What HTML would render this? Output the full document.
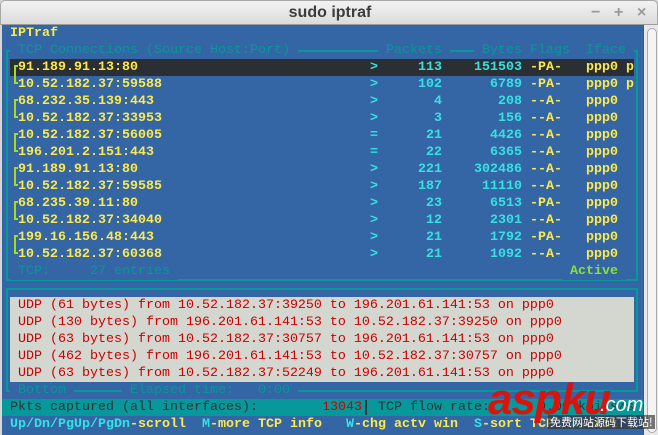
<!DOCTYPE html>
<html><head><meta charset="utf-8"><style>
*{margin:0;padding:0;box-sizing:border-box}
body{width:658px;height:435px;overflow:hidden;background:#d6d6d6;position:relative;font-family:"Liberation Mono",monospace}
#title{position:absolute;left:0;top:0;width:658px;height:25px;background:linear-gradient(#f2f2f2,#dcdcdc);border:1px solid #a8a8a8;border-bottom:1px solid #9a9a9a;border-radius:5px 5px 0 0}
#title .t{position:absolute;left:0;width:658px;top:3px;text-align:center;font:bold 16px "Liberation Sans",sans-serif;color:#3c3c3c}
#title .b{position:absolute;top:3px;font:bold 16px "Liberation Sans",sans-serif;color:#9a9a9a}
#term{position:absolute;left:2px;top:25px;width:641px;height:410px;background:#3465a4;overflow:hidden}
#sb{position:absolute;left:643px;top:25px;width:15px;height:410px;background:#e8e8e8;border-left:1px solid #555}
#sb div{position:absolute;left:3px;top:3px;width:10px;height:405px;border:1px solid #aaa;border-radius:5px;background:#f4f4f4}
.s{position:absolute;font-size:13.333px;line-height:17px;height:17px;white-space:pre}
.y{color:#fce94f;font-weight:bold}
.c{color:#34e2e2;font-weight:bold}
.t2{color:#06989a}
.r{color:#cc0000}
.hl{position:absolute;background:#06989a}
.vl{position:absolute;background:#06989a;width:2px}
.br{position:absolute;border-left:2px solid #a4dc1e;border-top:2px solid #a4dc1e;border-bottom:2px solid #a4dc1e;width:4px}
</style></head><body>
<div id="title"><div class="t">sudo iptraf</div><div class="b" style="left:590px">−</div><div class="b" style="left:613px">+</div><div class="b" style="left:636px">×</div></div>
<div id="term">
<div class="s y" style="left:8px;top:0">IPTraf</div>
<div class="hl" style="left:4px;top:25px;width:632px;height:2px"></div>
<div class="vl" style="left:4px;top:25px;height:230px"></div>
<div class="vl" style="left:634px;top:25px;height:230px"></div>
<div class="hl" style="left:4px;top:254px;width:632px;height:2px"></div>
<div class="s t2" style="left:8px;top:17px;background:#3465a4"> TCP Connections (Source Host:Port) </div>
<div class="s t2" style="left:376px;top:17px;background:#3465a4"> Packets </div>
<div class="s t2" style="left:472px;top:17px;background:#3465a4"> Bytes Flags  Iface </div>
<div class="s t2" style="left:8px;top:238px;background:#3465a4"> TCP:     27 entries </div>
<div class="s" style="left:560px;top:238px;background:#3465a4;color:#8ae234;font-weight:bold"> Active </div>
<div style="position:absolute;left:8px;top:34px;width:624px;height:17px;background:#2b2f33"></div>
<div class="br" style="top:40px;left:12px;height:19px"></div>
<div class="br" style="top:74px;left:12px;height:19px"></div>
<div class="br" style="top:108px;left:12px;height:19px"></div>
<div class="br" style="top:142px;left:12px;height:19px"></div>
<div class="br" style="top:176px;left:12px;height:19px"></div>
<div class="br" style="top:210px;left:12px;height:19px"></div>

<div class="s y" style="left:16px;top:34px">91.189.91.13:80</div>
<div class="s y" style="left:16px;top:51px">10.52.182.37:59588</div>
<div class="s y" style="left:16px;top:68px">68.232.35.139:443</div>
<div class="s y" style="left:16px;top:85px">10.52.182.37:33953</div>
<div class="s y" style="left:16px;top:102px">10.52.182.37:56005</div>
<div class="s y" style="left:16px;top:119px">196.201.2.151:443</div>
<div class="s y" style="left:16px;top:136px">91.189.91.13:80</div>
<div class="s y" style="left:16px;top:153px">10.52.182.37:59585</div>
<div class="s y" style="left:16px;top:170px">68.235.39.11:80</div>
<div class="s y" style="left:16px;top:187px">10.52.182.37:34040</div>
<div class="s y" style="left:16px;top:204px">199.16.156.48:443</div>
<div class="s y" style="left:16px;top:221px">10.52.182.37:60368</div>

<div class="s c" style="left:368px;top:34px">&gt;     113    151503</div>
<div class="s c" style="left:368px;top:51px">&gt;     102      6789</div>
<div class="s c" style="left:368px;top:68px">&gt;       4       208</div>
<div class="s c" style="left:368px;top:85px">&gt;       3       156</div>
<div class="s c" style="left:368px;top:102px">=      21      4426</div>
<div class="s c" style="left:368px;top:119px">=      22      6365</div>
<div class="s c" style="left:368px;top:136px">&gt;     221    302486</div>
<div class="s c" style="left:368px;top:153px">&gt;     187     11110</div>
<div class="s c" style="left:368px;top:170px">&gt;      23      6513</div>
<div class="s c" style="left:368px;top:187px">&gt;      12      2301</div>
<div class="s c" style="left:368px;top:204px">&gt;      21      1792</div>
<div class="s c" style="left:368px;top:221px">&gt;      21      1092</div>

<div class="s y" style="left:528px;top:34px">-PA-   ppp0 p</div>
<div class="s y" style="left:528px;top:51px">-PA-   ppp0 p</div>
<div class="s y" style="left:528px;top:68px">--A-   ppp0</div>
<div class="s y" style="left:528px;top:85px">--A-   ppp0</div>
<div class="s y" style="left:528px;top:102px">--A-   ppp0</div>
<div class="s y" style="left:528px;top:119px">--A-   ppp0</div>
<div class="s y" style="left:528px;top:136px">--A-   ppp0</div>
<div class="s y" style="left:528px;top:153px">--A-   ppp0</div>
<div class="s y" style="left:528px;top:170px">-PA-   ppp0</div>
<div class="s y" style="left:528px;top:187px">--A-   ppp0</div>
<div class="s y" style="left:528px;top:204px">-PA-   ppp0</div>
<div class="s y" style="left:528px;top:221px">--A-   ppp0</div>

<div class="hl" style="left:4px;top:263px;width:632px;height:2px"></div>
<div class="vl" style="left:4px;top:263px;height:103px"></div>
<div class="vl" style="left:634px;top:263px;height:103px"></div>
<div class="hl" style="left:4px;top:365px;width:632px;height:2px"></div>
<div style="position:absolute;left:8px;top:272px;width:624px;height:85px;background:#d3d7cf"></div>
<div class="s r" style="left:16px;top:272px">UDP (61 bytes) from 10.52.182.37:39250 to 196.201.61.141:53 on ppp0</div>
<div class="s r" style="left:16px;top:289px">UDP (130 bytes) from 196.201.61.141:53 to 10.52.182.37:39250 on ppp0</div>
<div class="s r" style="left:16px;top:306px">UDP (63 bytes) from 10.52.182.37:30757 to 196.201.61.141:53 on ppp0</div>
<div class="s r" style="left:16px;top:323px">UDP (462 bytes) from 196.201.61.141:53 to 10.52.182.37:30757 on ppp0</div>
<div class="s r" style="left:16px;top:340px">UDP (63 bytes) from 10.52.182.37:52249 to 196.201.61.141:53 on ppp0</div>
<div class="s t2" style="left:8px;top:357px;background:#3465a4"> Bottom </div>
<div class="s t2" style="left:120px;top:357px;background:#3465a4"> Elapsed time:   0:00 </div>
<div style="position:absolute;left:0;top:374px;width:641px;height:17px;background:#06989a"></div>
<div class="s" style="left:8px;top:374px;color:#2e3436">Pkts captured (all interfaces):</div>
<div class="s r" style="left:320px;top:374px">13043</div>
<div style="position:absolute;left:363px;top:375px;width:2px;height:15px;background:#2e3436"></div>
<div class="s" style="left:376px;top:374px;color:#2e3436">TCP flow rate:      0.00 kbits/s</div>
<div class="s" style="left:8px;top:391px"><span class="c">Up/Dn/PgUp/PgDn</span><span class="y">-scroll</span>  <span class="c">M</span><span class="y">-more TCP info</span>   <span class="c">W</span><span class="y">-chg actv win</span>  <span class="c">S</span><span class="y">-sort TCP</span>  <span class="c">X</span><span class="y">-exit</span></div>
</div>
<div id="sb"><div></div></div>
<div style="position:absolute;left:488px;top:378px;font:italic bold 44px 'Liberation Sans',sans-serif;color:#d9140f;letter-spacing:-1px;line-height:44px">aspku</div>
<div style="position:absolute;left:600px;top:395px;font:italic 20px 'Liberation Sans',sans-serif;color:#fff;line-height:20px">.com</div>
<div style="position:absolute;left:548px;top:415px;font:11px 'Noto Sans CJK SC',sans-serif;color:#fff;line-height:14px;background:#333a;padding:0 2px">免费网站源码下载站!</div>
</body></html>
